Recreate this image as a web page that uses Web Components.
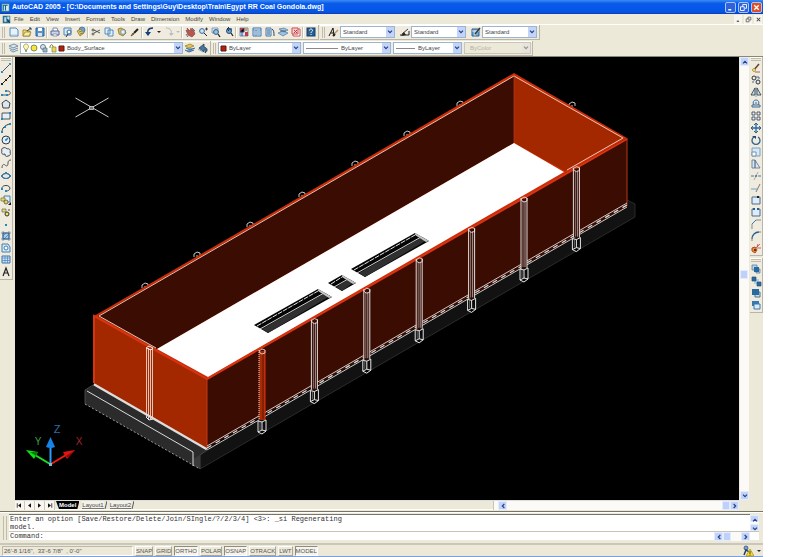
<!DOCTYPE html>
<html lang="en">
<head>
<meta charset="utf-8">
<title>AutoCAD 2005</title>
<style>
html, body { margin: 0; height: 100%; background: #fff; }
body { font: 6px/8px "Liberation Sans", Arial, sans-serif; color: #444; }
</style>
</head>
<body>
<cad-window></cad-window>
<script>
const ICONS = {
  new: '<path d="M2 2h6l2 2v6H2z" fill="#e6f2fc" stroke="#5b87b5"/><path d="M3 9h6" stroke="#a9cbea"/>',
  open: '<path d="M2 4h3l1 1h3v5H2z" fill="#f3dc7c" stroke="#a88a2c"/><path d="M2 10l2-4h6l-2 4z" fill="#f8eb9d" stroke="#8d7a38" stroke-width=".7"/><path d="M6 5l4-3M8 2h2v2" stroke="#33454f" fill="none"/>',
  save: '<path d="M2 2h8v8H2z" fill="#5a94cf" stroke="#2f6396"/><path d="M4 2h4v3H4z" fill="#fff"/><path d="M4 7h4v3H4z" fill="#d7e6f5"/>',
  print: '<path d="M4 5V2h4l1 3" fill="#fff" stroke="#7b8eb0"/><path d="M2 5h8v4H2z" fill="#cfd6e8" stroke="#596b96"/><path d="M4 8h4v2H4z" fill="#fff" stroke="#596b96" stroke-width=".6"/>',
  preview: '<path d="M2 2h7v7H2z" fill="#d8e9f8" stroke="#4c86b9"/><circle cx="7" cy="6" r="2" fill="#fff" stroke="#35658f"/><path d="M6 8l-2 3" stroke="#333"/>',
  publish: '<circle cx="7" cy="4" r="3" fill="#6ba3d6" stroke="#39658e" stroke-width=".7"/><path d="M2 5l4-2 3 4-4 3z" fill="#e9c64b" stroke="#7f6e2b" stroke-width=".7"/><path d="M4 6l3-1M5 8l3-1" stroke="#33639b" stroke-width=".7"/>',
  cut: '<path d="M4 4l6 3M4 7l6-3" stroke="#555"/><circle cx="3" cy="4" r="1" fill="none" stroke="#333" stroke-width=".8"/><circle cx="3" cy="8" r="1" fill="none" stroke="#333" stroke-width=".8"/>',
  copy: '<path d="M2 2h5v6H2zM5 4h5v6H5z" fill="#e3f1fd" stroke="#4b83b7" stroke-width=".9"/>',
  paste: '<path d="M2 3l3-1 4 2 1 3-3 3-4-2z" fill="#d9bd57" stroke="#857234" stroke-width=".8"/><path d="M5 4h4v4H5z" fill="#e8f4fe" stroke="#6685a8" stroke-width=".7"/>',
  match: '<path d="M2 10l2-3 1 1z" fill="#a98b4d" stroke="#6f552a"/><path d="M5 7l4-4" stroke="#222" stroke-width="2"/>',
  undo: '<path d="M9 2C4 2 3 5 4 9" fill="none" stroke="#173e78" stroke-width="1.500"/><path d="M1 6h6L4 10z" fill="#173e78"/>',
  redo: '<path d="M3 2c5 0 6 3 5 7" fill="none" stroke="#b9bcc0"/><path d="M6 7l2 3 3-3z" fill="#b9bcc0"/>',
  pan: '<path d="M3 2l1 3-2-1 2 5 4 2 3-3-2-5-1 2-1-3-1 3z" fill="#b8574f" stroke="#843a35" stroke-width=".6"/><path d="M8 2l3 3M2 8l2 3" stroke="#5d7086"/>',
  zoomrt: '<circle cx="5" cy="5" r="2.400" fill="#cfe3f6" stroke="#336a9d"/><path d="M7 7l3 3" stroke="#222"/><path d="M8 3h3M9.500 1.500v3" stroke="#222" stroke-width=".8"/>',
  zoomwin: '<path d="M2 2h6v5H2z" fill="#cfe3f6" stroke="#6888a6" stroke-width=".7"/><circle cx="6" cy="6" r="2.400" fill="#99c2e6" stroke="#305c89"/><path d="M8 8l2 3" stroke="#222" stroke-width="1.300"/>',
  zoomprev: '<circle cx="6" cy="5" r="2.500" fill="#6fa1cb" stroke="#284f79"/><path d="M8 7l2 3" stroke="#222" stroke-width="1.300"/><path d="M9 3H4l2-2M4 3l2 2" stroke="#173458" fill="none"/>',
  props: '<path d="M2 2h8v8H2z" fill="#d7e5f4" stroke="#4f678a" stroke-width=".7"/><path d="M2 2h3v3H2zM7 6h3v4H7z" fill="#c23a4d"/><path d="M6 2v4H2M4 6v4" stroke="#234f93"/><path d="M8 2v3" stroke="#e69d36" stroke-width="2"/>',
  dcenter: '<path d="M2 2h8v8H2z" fill="#e2effa" stroke="#3c74ab"/><path d="M2 4h8M5 4v6M6 6h3M6 8h3M3 6h1M3 8h1" stroke="#477fae" stroke-width=".9"/>',
  palettes: '<path d="M2 2h5v8H2z" fill="#d9e9f7" stroke="#4478a8"/><path d="M3 4h3M3 6h3M3 8h3" stroke="#315f91"/><path d="M8 3c2 1 2 4 2 7" stroke="#2d4668" fill="none"/>',
  sheets: '<path d="M2 3l5-1 4 2-4 2zM1 7l5-2 5 2-5 3z" fill="#9fc3df" stroke="#497da8" stroke-width=".7"/><path d="M3 5h6" stroke="#596475"/>',
  markup: '<path d="M3 3h7v7H3z" fill="#fff" stroke="#c9575b"/><path d="M2 2h6v6H2z" fill="#f7d2d2" stroke="#d14c51"/><path d="M4 4l3 3M7 4L4 7" stroke="#b93e44"/>',
  help: '<rect x="2" y="2" width="8" height="8" fill="#285f94" stroke="#173f69"/><path d="M4.500 4.500c0-2 3-2 3 0 0 1-1.500 1-1.500 2.500M6 8v1" fill="none" stroke="#fff"/>',
  textstyle: '<path d="M1 10l4-8 1 8M3 7h3" stroke="#111" fill="none"/><path d="M6 8l4-4" stroke="#ba965d" stroke-width="1.500"/><path d="M5 10l2-2" stroke="#222" stroke-width="2"/>',
  dimstyle: '<path d="M1 9h9V5" stroke="#222" fill="none"/><path d="M3 8l6-5" stroke="#444"/><path d="M2 10l3-4 2 3z" fill="#222"/>',
  tablestyle: '<path d="M2 3h7v7H2z" fill="#76aeda" stroke="#2e5f8d"/><path d="M2 5h7M5 5v5" stroke="#fff" stroke-width=".7"/><path d="M5 8l5-6" stroke="#3b342a" stroke-width="1.300"/>',
  layers: '<path d="M1 4l5-2 4 2-5 2zM1 6l4 2 5-2M2 8l3 2 5-2" fill="#dbe7ee" stroke="#698ba4" stroke-width=".9"/>',
  makelayer: '<path d="M1 4l5-2 4 2-5 2z" fill="#e5c850" stroke="#88752d" stroke-width=".7"/><path d="M2 6l4 2 5-2M1 8l4 2 5-2" fill="#7ea6c8" stroke="#3a678f"/>',
  layerprev: '<path d="M2 6l5-4v3c4 1 4 4 1 6l1-3H7v2z" fill="#4a769f" stroke="#233f5c" stroke-width=".8"/><path d="M1 7l5 3" stroke="#8ba2b5"/>',
  line: '<path d="M2 10l8-8" stroke="#555"/><path d="M1 9h2v2H1zM9 1h2v2H9z" fill="#2b8cc9"/>',
  xline: '<path d="M2 10l8-8" stroke="#222"/><path d="M1 9h2v2H1zM9 1h2v2H9zM5 5h2v2H5z" fill="#222"/>',
  pline: '<path d="M2 9h6c3 0 3-4 0-4H6" stroke="#555" fill="none"/><path d="M1 8h2v2H1zM6 8h2v2H6zM5 4h2v2H5z" fill="#2386c2"/>',
  polygon: '<path d="M6 2l4 3-1 5H3L2 5z" fill="#dce7f4" stroke="#444"/>',
  rect: '<path d="M2 3h8v6H2z" fill="#e3effc" stroke="#555"/><path d="M1 8h2v2H1zM9 2h2v2H9z" fill="#2386c2"/>',
  arc: '<path d="M2 10c0-4 3-7 8-8" fill="none" stroke="#333"/><path d="M1 9h2v2H1zM4 4h2v2H4zM9 1h2v2H9z" fill="#2386c2"/>',
  circle: '<circle cx="6" cy="6" r="4" fill="#e3effb" stroke="#2f3b49"/><path d="M6 6l2-2M5 6h2" stroke="#1984c8" stroke-width="1.500"/>',
  revcloud: '<path d="M3 2c2-1 3 0 4 1 2-1 4 1 3 3 1 2 0 4-2 4-2 1-3 0-3-2-3 1-4-1-3-3-1-1 0-3 1-3z" fill="#e5effa" stroke="#444"/>',
  spline: '<path d="M2 10c0-4 2-4 3-3s3 2 3-2c0-2 1-3 3-3" fill="none" stroke="#555"/>',
  ellipse: '<ellipse cx="6" cy="6" rx="4" ry="2.500" fill="#dceafb" stroke="#333"/><path d="M1 5h2v2H1zM9 5h2v2H9zM5 2h2v2H5zM5 8h2v1H5z" fill="#2386c2"/>',
  earc: '<path d="M2 7c-1-4 7-5 8-1 0 2-2 3-4 3" fill="none" stroke="#444"/><path d="M1 6h2v2H1zM5 8h2v2H5z" fill="#2386c2"/>',
  insert: '<path d="M4 2h6v6H4z" fill="#e0edf8" stroke="#477faf"/><path d="M1 4h4v3H1z" fill="#ecdb57" stroke="#726f30" stroke-width=".7"/><circle cx="6" cy="8" r="2" fill="#e4d44e" stroke="#444" stroke-width=".7"/><path d="M8 11h3V8z" fill="#111"/>',
  block: '<path d="M2 3h4v3H2z" fill="#ecdb57" stroke="#666" stroke-width=".7"/><circle cx="7" cy="8" r="2" fill="#f0e263" stroke="#333"/><path d="M8 4h2" stroke="#444"/>',
  point: '<path d="M5 6h2v2H5z" fill="#2386c2"/>',
  hatch: '<path d="M3 3h6v6H3z" fill="#a9cbe8" stroke="#37658e"/><path d="M1 3h10M1 9h10M3 1v10M9 1v10M3 6l3-3M4 9l5-5" stroke="#37658e" stroke-width=".6"/>',
  region: '<path d="M2 2h6l2 3v5H2z" fill="#d8eafa" stroke="#437dac"/><circle cx="6" cy="6" r="2" fill="#fff" stroke="#437dac"/>',
  table: '<path d="M2 2h8v7H2z" fill="#d2e6fa" stroke="#3c73aa"/><path d="M2 4h8M2 6.500h8M5 2v7M7.500 2v7" stroke="#568bc0" stroke-width=".8"/>',
  mtext: '<path d="M3 10l3-8 3 8M4 7h4" stroke="#222" fill="none" stroke-width="1.200"/>',
  erase: '<path d="M3 9l6-7" stroke="#5c462f" stroke-width="1.500"/><path d="M2 8l2-2 2 2-2 2z" fill="#e8d568" stroke="#9b8438" stroke-width=".6"/><path d="M5 10h5" stroke="#c25b48"/>',
  copyobj: '<circle cx="4" cy="4" r="2" fill="none" stroke="#333"/><circle cx="8" cy="8" r="2" fill="#dbe9f5" stroke="#333"/><path d="M6 3h3v2M3 7v2" stroke="#3b6e9d" fill="none"/>',
  mirror: '<path d="M5 2v7H1zM7 2v7h4z" fill="#c1dbef" stroke="#333" stroke-width=".8"/><path d="M6 1v10" stroke="#2d76ae" stroke-width=".6"/>',
  offset: '<path d="M2 9V7h2c-2-3 0-5 2-5s4 2 2 5h2v2z" fill="#d5e6f5" stroke="#3c6a93"/><path d="M4 7h4M5 5h2" stroke="#444" stroke-width=".8"/>',
  array: '<path d="M2 2h3v3H2zM7 2h3v3H7zM2 7h3v3H2zM7 7h3v3H7z" fill="#e3f1fd" stroke="#454f5b" stroke-width=".9"/>',
  move: '<path d="M6 1v10M1 6h10" stroke="#2c6596" stroke-width="1.300"/><path d="M4 3l2-2 2 2M4 9l2 2 2-2M3 4L1 6l2 2M9 4l2 2-2 2" fill="none" stroke="#2c6596"/>',
  rotate: '<path d="M4 3a4 4 0 1 0 4 0" fill="none" stroke="#2d638e" stroke-width="1.300"/><path d="M2 2h4v3z" fill="#234b70"/>',
  scale: '<path d="M2 2h8v8H2z" fill="#d8e7f6" stroke="#7ca0c1"/><path d="M2 6h4v4H2z" fill="#fff" stroke="#7391b0"/>',
  stretch: '<path d="M2 2h3v8H2zM5 2l5 8H5z" fill="#dce9f5" stroke="#556f88" stroke-width=".8"/>',
  trim: '<path d="M1 6h3M8 6h3" stroke="#377fb3"/><path d="M4 10l4-8" stroke="#aaa"/><path d="M5 6h2" stroke="#333"/>',
  extend: '<path d="M1 7h6" stroke="#67a4ca"/><path d="M6 10l4-8" stroke="#777"/>',
  breakpt: '<path d="M2 3h8v7H2z" fill="#dcecfb" stroke="#506a85"/><path d="M7 2h2v2H7z" fill="#222"/>',
  break: '<path d="M4 3H2v7h8V3H8" fill="#dcecfb" stroke="#506a85"/><path d="M3 2h2v2H3zM7 2h2v2H7z" fill="#275b8b"/>',
  chamfer: '<path d="M2 11V6l4-4h5" fill="none" stroke="#888"/><path d="M2 6l4-4" stroke="#327db5"/>',
  fillet: '<path d="M2 11V9M9 2h2" stroke="#888"/><path d="M2 9c0-4 3-7 7-7" fill="none" stroke="#275f91" stroke-width="1.300"/>',
  explode: '<path d="M2 6l3-1 2 3-2 3-3-2z" fill="#d89c36" stroke="#b34625"/><path d="M6 6l4-4M7 5l1-3M7 6h4" stroke="#c4483c" stroke-width=".8"/><path d="M4 7h2v2H4z" fill="#8d221d"/>',
  front: '<path d="M2 2h5v5H2zM6 6h4v4H6z" fill="#b6d1e8" stroke="#4f738f" stroke-width=".7"/><path d="M4 4h5v5H4z" fill="#276aa0"/>',
  back: '<path d="M4 4h5v5H4z" fill="#b6d1e8"/><path d="M2 2h4v4H2zM7 7h4v4H7z" fill="#276aa0" stroke="#28547a" stroke-width=".7"/>',
  above: '<path d="M5 5h5v5H5z" fill="#c7deef" stroke="#4f738f"/><path d="M2 2h7v6H2z" fill="#276aa0"/>',
  under: '<path d="M2 2h7v5H2z" fill="#3979ad"/><path d="M4 5h6v5H4z" fill="#dceafa" stroke="#3979ad"/>',
  app: '<path d="M1 1h10v10H1z" fill="#d6edf4" stroke="#236c83"/><path d="M3 10V3h6M6 3v7" stroke="#156783" fill="none" stroke-width="1.500"/>',
  dwg: '<path d="M1 1h10v10H1z" fill="#2c7093"/><path d="M3 3h3v6H3zM7 2h3v4H7z" fill="#bde0ef"/><path d="M6 5l4 5" stroke="#111"/>',
  caret: '<path d="M4 5h4L6 7z" fill="#222"/>',
  nocaret: '<path d="M4 5h4L6 7z" fill="#bbb"/>',
  first: '<path d="M3 3v6" stroke="#111"/><path d="M8 3v6L4 6z" fill="#111"/>',
  prev: '<path d="M8 3v6L4 6z" fill="#111"/>',
  next: '<path d="M4 3v6l4-3z" fill="#111"/>',
  last: '<path d="M4 3v6l4-3z" fill="#111"/><path d="M9 3v6" stroke="#111"/>',
  up: '<path d="M3 8l3-3 3 3" fill="none" stroke="#24427c" stroke-width="1.800"/>',
  down: '<path d="M3 4l3 3 3-3" fill="none" stroke="#24427c" stroke-width="1.800"/>',
  left: '<path d="M8 3L5 6l3 3" fill="none" stroke="#24427c" stroke-width="1.800"/>',
  right: '<path d="M4 3l3 3-3 3" fill="none" stroke="#24427c" stroke-width="1.800"/>',
  minimize: '<path d="M3 9h4" stroke="currentColor" stroke-width="2"/>',
  restore: '<path d="M5 5V2h5v5H8M2 5h5v5H2z" fill="none" stroke="currentColor" stroke-width="1.200"/>',
  close: '<path d="M3 3l6 6M9 3L3 9" stroke="currentColor" stroke-width="1.800"/>',
  comm: '<circle cx="4" cy="3" r="2" fill="#7da5d4" stroke="#334d77" stroke-width=".8"/><path d="M2 10l2-5 3 2" stroke="#253e69" fill="none" stroke-width="1.500"/><path d="M8 4l4 7H4z" fill="#f6df26" stroke="#9d8b20" stroke-width=".7"/><path d="M8 6v3M8 9.500v1" stroke="#222" stroke-width=".8"/>'
};
const icon = name => `<svg viewBox="0 0 12 12" aria-hidden="true">${ICONS[name]}</svg>`;

function define(tag, css, render) {
  customElements.define(tag, class extends HTMLElement {
    connectedCallback() {
      if (this.shadowRoot) return;
      const template = document.createElement('template');
      template.innerHTML = `<style>*{box-sizing:border-box}svg{display:block}button{font:inherit;color:inherit;margin:0;padding:0;border:0;background:none}${css}</style>${render(this)}`;
      this.attachShadow({ mode: 'open' }).append(template.content.cloneNode(true));
    }
  });
}
const attr = (el, name) => el.getAttribute(name) || '';

define('cad-icon', ':host{display:block;flex:none;width:12px;height:12px}svg{width:100%;height:100%}',
  el => icon(attr(el, 'name')));

define('tool-button', `:host{display:block;flex:none;width:13px;height:12px}
  :host([narrow]){width:6px}button{display:flex;width:100%;height:100%;justify-content:center;align-items:center}
  svg{width:12px;height:12px;flex:none}`,
  el => `<button aria-label="${attr(el, 'label') || attr(el, 'name')}">${icon(attr(el, 'name'))}</button>`);

define('tool-separator', ':host{display:block;flex:none;width:2px;height:11px;border-left:1px solid #c5c2b0;border-right:1px solid #fff}', () => '');

define('tool-bar', `:host{display:flex;align-items:center;height:15px;padding:0 1px 0 2px;border:solid;border-width:0 1px 1px 0;border-color:#b9b6a5;background:#efecdf;box-shadow:inset 0 1px #fff}
  i{flex:none;width:3px;height:11px;margin-right:2px;border:solid #bfbcaa;border-width:0 1px}
  :host([vertical]){flex-direction:column;width:13px;height:auto;padding:1px 0 1px}
  :host([vertical]) i{width:10px;height:3px;margin:0 0 1px;border-width:1px 0}`,
  () => '<i></i><slot></slot>');

define('combo-box', `:host{display:flex;align-items:center;height:12px;border:1px solid #9db4cf;background:#fff;color:#444}
  :host([disabled]){background:#ece9d8;border-color:#c9c7ba;color:#b5b2a2}
  select{appearance:none;flex:1;min-width:0;height:10px;border:0;padding:0 0 0 2px;margin:0;background:none;font:inherit;color:inherit;opacity:1}
  span{flex:none;width:8px;height:10px;background:#c3d4fb;display:grid;place-items:center}
  :host([disabled]) span{background:#e4e1d2;filter:grayscale(1);opacity:.5}
  span svg{width:8px;height:8px}`,
  el => `<slot></slot><select aria-label="${attr(el, 'label')}" ${el.hasAttribute('disabled') ? 'disabled' : ''}><option>${attr(el, 'value')}</option></select><span>${icon('down')}</span>`);

define('title-bar', `:host{display:flex;align-items:center;height:14px;padding:0 1px;background:linear-gradient(#3b8bf5,#0a5be8 25%,#0557ea 70%,#0a4fd8 92%,#0535a8);color:#fff}
  h1{flex:1;margin:0 0 0 2px;font:bold 7px/10px "Liberation Sans",Arial,sans-serif;white-space:nowrap}
  cad-icon{width:9px;height:9px}
  div{display:flex;gap:2px}button{width:11px;height:11px;border:1px solid #a9c4f6;border-radius:2px;background:#2f62dd;display:grid;place-items:center}
  button svg{width:9px;height:9px}button:last-child{background:#dd4f2a}`,
  () => `<cad-icon name="app"></cad-icon><h1>AutoCAD 2005 - [C:\\Documents and Settings\\Guy\\Desktop\\Train\\Egypt RR Coal Gondola.dwg]</h1>
  <div><button aria-label="Minimize">${icon('minimize')}</button><button aria-label="Restore">${icon('restore')}</button><button aria-label="Close">${icon('close')}</button></div>`);

define('menu-bar', `:host{display:flex;align-items:center;height:11px;padding:0 1px 0 2px;border-bottom:1px solid #fff;background:#ece9d8}
  cad-icon{width:9px;height:9px}nav{flex:1;display:flex;gap:6px;margin-left:3px}
  div{display:flex;gap:2px}div button{width:8px;height:9px;background:#f7f5ee;display:grid;place-items:center}div svg{width:7px;height:7px}`,
  () => `<cad-icon name="dwg"></cad-icon><nav>${['File', 'Edit', 'View', 'Insert', 'Format', 'Tools', 'Draw', 'Dimension', 'Modify', 'Window', 'Help'].map(t => `<button>${t}</button>`).join('')}</nav>
  <div><button aria-label="Minimize drawing">${icon('minimize')}</button><button aria-label="Restore drawing">${icon('restore')}</button><button aria-label="Close drawing">${icon('close')}</button></div>`);

define('scroll-bar', `:host{display:flex;background:#fbfaf6;height:9px}
  :host([vertical]){flex-direction:column;height:auto;width:9px}
  button{flex:none;width:9px;height:9px;border:1px solid #e3ebfe;border-radius:1px;background:#c1d2fb;display:grid;place-items:center}
  svg{width:8px;height:8px}i{flex:var(--before,1)}b{flex:none;width:8px;height:9px;border:1px solid #e3ebfe;background:#bfd0fa}s{flex:var(--after,1)}
  :host([thumbless]) b{display:none}
  :host([thumbless]) button{height:7px}`,
  el => {
    const v = el.hasAttribute('vertical');
    return `<button aria-label="Scroll ${v ? 'up' : 'left'}">${icon(v ? 'up' : 'left')}</button><i></i><b></b><s></s><button aria-label="Scroll ${v ? 'down' : 'right'}">${icon(v ? 'down' : 'right')}</button>`;
  });

const row = names => names.map(n => n === '|' ? '<tool-separator></tool-separator>' : `<tool-button name="${n}" ${/caret/.test(n) ? 'narrow label="More"' : ''}></tool-button>`).join('');

define('tool-rows', `:host{display:grid;gap:1px;background:#ece9d8;border-bottom:1px solid #8a8775}
  div{display:flex;gap:1px}.row2{gap:0}.style{width:55px;margin-right:1px}.style~tool-button{margin-left:2px}
  .layer{width:163px}.color{width:83px;margin-right:2px}.type{width:88px;margin-right:2px}.weight{width:69px;margin-right:2px}.plot{width:67px}`,
  () => `<div><tool-bar>${row(['new', 'open', 'save', '|', 'print', 'preview', 'publish', '|', 'cut', 'copy', 'paste', 'match', '|', 'undo', 'caret', 'redo', 'nocaret', '|', 'pan', 'zoomrt', 'zoomwin', 'zoomprev', '|', 'props', 'dcenter', 'palettes', 'sheets', 'markup', '|', 'help'])}</tool-bar>
  <tool-bar><tool-button name="textstyle"></tool-button><combo-box class="style" label="Text style" value="Standard"></combo-box>
  <tool-button name="dimstyle"></tool-button><combo-box class="style" label="Dimension style" value="Standard"></combo-box>
  <tool-button name="tablestyle"></tool-button><combo-box class="style" label="Table style" value="Standard"></combo-box></tool-bar></div>
  <div class="row2"><tool-bar><tool-button name="layers"></tool-button>
  <combo-box class="layer" label="Layer" value="Body_Surface"><svg width="44" height="10" viewBox="0 0 44 10">
    <path d="M4 7V6C1 4 3 1 5 1s4 3 1 5v1z" fill="#fbf5b4" stroke="#8b8550" stroke-width=".7"/><path d="M4 8h2" stroke="#444"/>
    <circle cx="13" cy="5" r="3" fill="#f1e63e" stroke="#8a8b4c"/>
    <circle cx="22" cy="4" r="2.500" fill="#dce8e8" stroke="#637d89"/><path d="M22 5h4v4h-4z" fill="#9bb6c4" stroke="#54707f" stroke-width=".7"/>
    <path d="M29 5V3q2-3 3 0v2" fill="none" stroke="#868332"/><path d="M31 4h4v5h-4z" fill="#eadb55" stroke="#8b8333" stroke-width=".7"/>
    <path d="M38 3h5v5h-5z" fill="#b32109" stroke="#5b180c"/></svg></combo-box>
  <tool-button name="makelayer"></tool-button><tool-button name="layerprev"></tool-button></tool-bar>
  <tool-bar><combo-box class="color" label="Color" value="ByLayer"><svg width="8" height="10" viewBox="0 0 8 10"><path d="M2 3h5v5H2z" fill="#b32109" stroke="#5b180c"/></svg></combo-box>
  <combo-box class="type" label="Linetype" value="ByLayer"><svg width="35" height="10"><path d="M2 5.500h32" stroke="#888"/></svg></combo-box>
  <combo-box class="weight" label="Lineweight" value="ByLayer"><svg width="22" height="10"><path d="M2 5.500h19" stroke="#888"/></svg></combo-box>
  <combo-box class="plot" label="Plot style" value="ByColor" disabled><svg width="3" height="10"></svg></combo-box></tool-bar></div>`);

function drawPost(i) {
  const x = 262 + i * 52.4, y = 350 - i * 30.4, first = i === 0;
  return `<g transform="translate(${x} ${y})"><path d="M-3 1v69h6V1z" fill="${first ? '#a32800' : '#3b0c02'}"/>
    <path d="M-3 0v70" stroke="#ddd" ${first ? 'stroke-dasharray="1 1"' : ''}/>
    <path d="M3 0v70" stroke="${first ? '#d83516' : '#ddd'}"/>
    <path d="M1 3v66" stroke="${first ? '#5b1505' : '#bbb'}" stroke-width=".8"/><path d="M-1 3v66" stroke="${first ? '#c53108' : '#bbb'}" stroke-width=".6"/>
    <path d="M-3 1l3-2 3 1v3l-3 1-2-1z" fill="none" stroke="#eee" stroke-width=".8"/>
    <path d="M-4 71l4 1 4-2v11l-4 3-4-2zM0 72v8l4 1M0 80l-4 2" fill="#080808" stroke="#fff" stroke-width=".9"/><path d="M-2 71v9" stroke="#aaa" stroke-width=".6"/></g>`;
}
function drawSlot(x1, y1, x2, y2) {
  return `<path d="M${x1} ${y1}L${x2} ${y2}l14 8L${x1 + 14} ${y1 + 8}z" fill="#050505"/>
    <path d="M${x1 + 8} ${y1 + 4}L${x2 + 7} ${y2 + 4}l5 3L${x1 + 14} ${y1 + 8}z" fill="#303030"/>
    <path d="M${x1 + 6} ${y1 + 4}L${x2 + 6} ${y2 + 4}" stroke="#e8e8e8" stroke-width=".9"/>
    <path d="M${x1 + 3} ${y1 + 1}L${x2} ${y2 + 2}" stroke="#fff" stroke-width=".9" stroke-dasharray="5 1"/>
    <path d="M${x2} ${y2}l14 8-3 1-11-7z" fill="#c4c4c4"/>`;
}
const bumps = [[145, 286], [197, 255], [250, 225], [302, 195], [355, 164], [407, 134], [460, 104], [572, 105]]
  .map(([x, y]) => `<path d="M${x - 3} ${y + 2}v-3l3-2 3 1v3M${x} ${y}v2" fill="none" stroke="#ddd" stroke-width=".9"/>`).join('');

define('model-view', `:host{display:block;min-width:0;min-height:0;overflow:hidden;background:#000}svg{width:100%;height:100%}`,
  () => `<svg viewBox="15 57 724 443" preserveAspectRatio="xMinYMin slice" role="img" aria-label="Gondola car model">
  <path d="M75.500 98l33 19M108.500 98l-33 19" stroke="#ddd" stroke-width=".9"/><path d="M89.500 106.500h4v3h-4z" fill="#777" stroke="#ddd" stroke-width=".7"/>
  ${bumps}
  <path d="M85 390l9-5 113 65-7 19-115-65z" fill="#2b2b2b"/><path d="M200 455l427-255 8 4v13L200 469z" fill="#121212"/>
  <path d="M200 469l435-252v-13l-8-4" fill="none" stroke="#343434" stroke-width=".8"/><path d="M200 455l7-5M200 455v14" stroke="#444"/>
  <path d="M193 459l7-4v14l-7-4z" fill="#3a3a3a"/>
  <path d="M85 404l115 65" stroke="#aaa" stroke-width=".9" stroke-dasharray="2 2"/>
  <path d="M85 390v14M85 390l8-5" stroke="#555" stroke-width=".8"/><path d="M87 391l106 61v14" fill="none" stroke="#eee" stroke-width=".9"/>
  <path d="M94 384l113 65" stroke="#ddd" stroke-width="3"/>
  <path d="M94 316L514 73l113 65-419 241z" fill="#cb2d07"/>
  <path d="M98 316L514 76v67L157 349z" fill="#3b0d02"/><path d="M514 76l109 62-58 33-51-28z" fill="#a32800"/>
  <path d="M157 349l357-206 50 29-356 205z" fill="#fff"/>
  <path d="M156 348L99 316 514 76l109 62-56 32" fill="none" stroke="#f0d5cc" stroke-width=".9"/>
  <path d="M514 76v67" stroke="#b53a20" stroke-width=".7"/>
  ${drawSlot(254, 325, 318, 289)}${drawSlot(328, 283, 342, 275)}${drawSlot(351, 269, 415, 233)}
  <path d="M94 316l113 64v68L94 383z" fill="#a32800"/><path d="M207 380l420-241v68L207 448z" fill="#3b0d02"/>
  <path d="M94 383v-67l113 63 420-240" fill="none" stroke="#d83411" stroke-width="2"/><path d="M627 138v68M207 380v68" stroke="#c93a1c" stroke-width=".9"/>
  <path d="M207 450l420-243M207 446l420-243" stroke="#ddd" stroke-width=".9"/>
  <path d="M207 448l420-243" stroke="#ddd" stroke-width="1.200" stroke-dasharray="5 5"/>
  <path d="M146.500 348v69M148.500 348v71M150.500 349v70M152.500 349v70" stroke="#e6d6cf" stroke-width=".9"/><path d="M146 348l3-2 4 2-2 2zM146 417l3 3 4-1" fill="none" stroke="#eee"/>
  ${[0, 1, 2, 3, 4, 5, 6].map(drawPost).join('')}
  <path d="M50.500 465v-20" stroke="#2e9df7" stroke-width="2"/><path d="M46 447l4.500-10 4.500 10q-4 2-9 0z" fill="#1583e8"/>
  <path d="M50 464l-15-9" stroke="#19e31d" stroke-width="2"/><path d="M26 450l12 2-4 7z" fill="#0de512"/><path d="M30 452l8 0-2 4z" fill="#087b0d"/>
  <path d="M51 464l15-9" stroke="#ef1c16" stroke-width="2"/><path d="M75 450l-12 2 4 7z" fill="#e21413"/><path d="M75 450l-9 6 2 2z" fill="#8c0908"/>
  <path d="M49 463h3v3h-3z" fill="#87b5d8"/>
  <g font-family="Liberation Sans, sans-serif" font-size="11" text-anchor="middle"><text x="57" y="433" fill="#2f6ea8">Z</text><text x="38" y="445" fill="#3f9e42" font-size="10">Y</text><text x="79" y="445" fill="#a52725" font-size="10">X</text></g>
  </svg>`);

define('layout-tabs', `:host{display:grid;grid-template-columns:481fr 247fr;height:10px;background:#ece9d8;border-top:1px solid #ddd;border-bottom:1px solid #fff}
  div{display:flex}.nav{width:10px;height:9px;background:#f8f6ef;border-right:1px solid #cbc8ba;display:grid;place-items:center}.nav svg{width:9px;height:9px}
  .tab{display:flex;height:8px;padding-left:3px}
  .tab button{height:8px;background:#f3f1e8;border-bottom:1px solid #777}
  .tab svg{width:3px;height:8px;flex:none}
  .on{height:8px;background:#000;color:#fff;font-weight:bold;padding:0 3px;margin-left:1px;clip-path:polygon(0 0,100% 0,calc(100% - 2px) 100%,3px 100%)}
  scroll-bar{--before:40;--after:0;border-left:1px solid #c8c5b6;padding-left:4px}`,
  () => {
    const edge = '<svg viewBox="0 0 3 8" aria-hidden="true"><path d="M3 0L1 8" stroke="#555" fill="none"/></svg>';
    return `<div>${['first', 'prev', 'next', 'last'].map(n => `<button class="nav" aria-label="${n} layout">${icon(n)}</button>`).join('')}<button class="on">Model</button>${['Layout1', 'Layout2'].map(t => `<span class="tab"><button>${t}</button>${edge}</span>`).join('')}</div><scroll-bar></scroll-bar>`;
  });

define('work-area', `:host{display:grid;grid-template-columns:15px minmax(0,1fr) 11px 13px;grid-template-rows:minmax(0,1fr) 11px;min-height:0;background:#ece9d8}
  aside{grid-row:1/3}.right{grid-column:4;display:grid;gap:2px;align-content:start}layout-tabs{grid-column:2}
  .v{margin:0 1px;--before:204;--after:213}.left{width:13px}`,
  () => `<aside><tool-bar vertical class="left">${row(['line', 'xline', 'pline', 'polygon', 'rect', 'arc', 'circle', 'revcloud', 'spline', 'ellipse', 'earc', 'insert', 'block', 'point', 'hatch', 'region', 'table', 'mtext'])}</tool-bar></aside>
  <model-view></model-view><scroll-bar class="v" vertical></scroll-bar>
  <aside class="right"><tool-bar vertical>${row(['erase', 'copyobj', 'mirror', 'offset', 'array', 'move', 'rotate', 'scale', 'stretch', 'trim', 'extend', 'breakpt', 'break', 'chamfer', 'fillet', 'explode'])}</tool-bar><tool-bar vertical>${row(['front', 'back', 'above', 'under'])}</tool-bar></aside>
  <layout-tabs></layout-tabs>`);

define('command-line', `:host{display:grid;grid-template-columns:9px minmax(0,1fr) 9px;padding:2px 4px 3px 0;border-top:1px solid #77746a;background:#ece9d8;box-shadow:inset 0 1px #fff}
  :host{font:7px/8px "Liberation Mono","Courier New",monospace;color:#333}
  i{grid-row:1/3;width:4px;margin:2px 0 0 3px;border:solid #c0bdac;border-width:0 1px}
  .log{height:17px;padding:0 1px;background:#fff;border-top:1px solid #77746a;white-space:nowrap;overflow:hidden}
  .row{grid-column:2/4;display:flex;align-items:center;height:9px;border-top:1px solid #c7c5ba;background:#fff;padding-left:1px}
  input{flex:1;min-width:0;border:0;padding:0;height:8px;font:inherit;background:none;outline:0}
  .v{margin-top:1px}.h{width:36px;margin-right:9px;--before:0;--after:1}`,
  () => `<i></i><div class="log">Enter an option [Save/Restore/Delete/Join/SIngle/?/2/3/4] &lt;3&gt;: _si Regenerating<br>model.</div><scroll-bar class="v" vertical thumbless></scroll-bar>
  <div class="row"><label for="cmd">Command:</label><input id="cmd"><scroll-bar class="h"></scroll-bar></div>`);

define('status-bar', `:host{display:flex;align-items:center;gap:2px;height:14px;padding:0 1px 0 2px;background:#ece9d8;border-top:2px solid #c9c7bb;border-bottom:1px solid #7b9fdc}
  output{width:131px;height:10px;padding:0 1px;border:1px solid;border-color:#bcb9a8 #fff #fff #bcb9a8;white-space:pre}
  button{height:10px;border:1px solid;border-color:#fff #aaa796 #aaa796 #fff}
  .on{border-color:#8f8c7d #fff #fff #8f8c7d;background:#f5f3ea}
  output,button{color:#555}p{flex:1;margin:0}`,
  () => `<output>26'-8 1/16",  33'-6 7/8"  , 0'-0"</output>${[['SNAP'], ['GRID'], ['ORTHO', 1], ['POLAR'], ['OSNAP', 1], ['OTRACK'], ['LWT'], ['MODEL', 1]].map(([t, on]) => `<button class="${on ? 'on' : ''}" aria-pressed="${!!on}">${t}</button>`).join('')}<p></p><cad-icon name="comm"></cad-icon><tool-button narrow name="caret" label="Tray settings"></tool-button>`);

define('cad-window', `:host{display:grid;grid-template-rows:auto auto auto minmax(0,1fr) auto auto;height:100vh;margin-right:37px;background:#ece9d8;box-shadow:inset -1px 0 #fff}`,
  () => '<title-bar></title-bar><menu-bar></menu-bar><tool-rows></tool-rows><work-area></work-area><command-line></command-line><status-bar></status-bar>');
</script>
</body>
</html>
